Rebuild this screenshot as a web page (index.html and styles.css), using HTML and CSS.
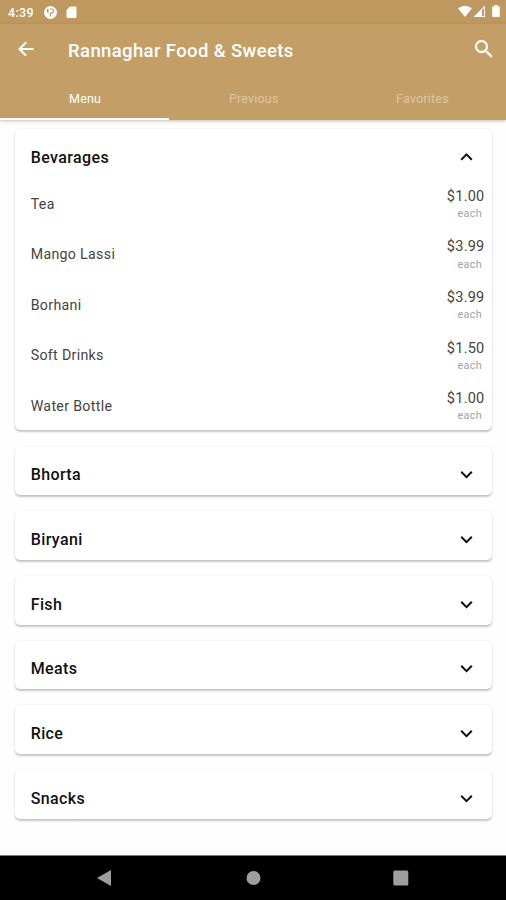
FILE: index.html
```html
<!DOCTYPE html>
<html lang="en">
<head>
<meta charset="utf-8">
<title>Rannaghar Food &amp; Sweets</title>
<link rel="stylesheet" href="styles.css">
</head>
<body>
<div class="screen">
  <div class="status">
    <span class="time">4:39</span>
    <svg class="notice" width="13" height="13" viewBox="0 0 13 13"><circle cx="6.5" cy="6.5" r="6.5" fill="#fff"/><path d="M6 3h1.500a2 2 0 0 1 0 4.200H6.300v3.300" fill="none" stroke="#bf995f" stroke-width="1.200"/><path d="M3.800 2.800v4" stroke="#bf995f" stroke-width="1.500"/></svg>
    <svg class="card-icon" width="11" height="13" viewBox="0 0 11 13"><path d="M4 .5h5.3c.7 0 1.2.5 1.2 1.2v9.1c0 .7-.5 1.2-1.2 1.2H1.700C1 12 .5 11.500.5 10.800V4z" fill="#fff"/><path d="M4 2v1.500M6 2v1.500M8 2v1.500" stroke="#eddfc9" stroke-width=".8"/></svg>
    <svg class="signals" width="43" height="14" viewBox="0 0 43 14"><path d="M0 3.300Q7-1.900 14 3.300L7 12z" fill="#fff"/><path d="M15.500 12L27 .5V12z" fill="#fff"/><path d="M24 5l2-2v8h-2z" fill="#bf995f"/><path d="M35 1.300h1.500V0h3v1.300H41c.5 0 .8.300.8.800v9.100c0 .5-.3.800-.8.800h-6c-.5 0-.8-.3-.8-.8V2.100c0-.5.300-.8.800-.8z" fill="#fff"/></svg>
  </div>
  <header class="appbar">
    <div class="titlebar">
      <svg class="back" width="24" height="24" viewBox="0 0 24 24"><path d="M19.500 11H7.830l5.090-5.090L11.500 4.500 4 12l7.500 7.500 1.410-1.410L7.830 13H19.500z" fill="#fff"/></svg>
      <h1>Rannaghar Food &amp; Sweets</h1>
      <svg class="search" width="24" height="24" viewBox="0 0 24 24"><path d="M15.500 14h-.79l-.28-.27A6.470 6.470 0 0 0 16 9.500 6.500 6.500 0 1 0 9.500 16c1.610 0 3.090-.59 4.230-1.570l.27.28v.79l5 4.990L20.490 19zm-6 0a4.500 4.500 0 1 1 0-9 4.500 4.500 0 0 1 0 9z" fill="#fff" stroke="#fff" stroke-width=".3"/></svg>
    </div>
    <nav class="tabs"><span class="tab active">Menu</span><span class="tab">Previous</span><span class="tab">Favorites</span></nav>
  </header>
  <main>
    <section class="card">
      <div class="head"><h2>Bevarages</h2><svg class="chev" width="24" height="24" viewBox="0 0 24 24"><path d="M12.500 8l-6 6 1.410 1.410L12.500 10.830l4.590 4.580L18.500 14z"/></svg></div>
      <div class="item"><span class="name">Tea</span><div class="cost"><span class="price">$1.00</span><span class="unit">each</span></div></div>
      <div class="item"><span class="name">Mango Lassi</span><div class="cost"><span class="price">$3.99</span><span class="unit">each</span></div></div>
      <div class="item"><span class="name">Borhani</span><div class="cost"><span class="price">$3.99</span><span class="unit">each</span></div></div>
      <div class="item"><span class="name">Soft Drinks</span><div class="cost"><span class="price">$1.50</span><span class="unit">each</span></div></div>
      <div class="item"><span class="name">Water Bottle</span><div class="cost"><span class="price">$1.00</span><span class="unit">each</span></div></div>
    </section>
    <section class="card"><div class="head"><h2>Bhorta</h2><svg class="chev" width="24" height="24" viewBox="0 0 24 24"><path d="M17.090 9.090L12.500 13.670 7.910 9.090 6.500 10.500l6 6 6-6z"/></svg></div></section>
    <section class="card"><div class="head"><h2>Biryani</h2><svg class="chev" width="24" height="24" viewBox="0 0 24 24"><path d="M17.090 9.090L12.500 13.670 7.910 9.090 6.500 10.500l6 6 6-6z"/></svg></div></section>
    <section class="card"><div class="head"><h2>Fish</h2><svg class="chev" width="24" height="24" viewBox="0 0 24 24"><path d="M17.090 9.090L12.500 13.670 7.910 9.090 6.500 10.500l6 6 6-6z"/></svg></div></section>
    <section class="card"><div class="head"><h2>Meats</h2><svg class="chev" width="24" height="24" viewBox="0 0 24 24"><path d="M17.090 9.090L12.500 13.670 7.910 9.090 6.500 10.500l6 6 6-6z"/></svg></div></section>
    <section class="card"><div class="head"><h2>Rice</h2><svg class="chev" width="24" height="24" viewBox="0 0 24 24"><path d="M17.090 9.090L12.500 13.670 7.910 9.090 6.500 10.500l6 6 6-6z"/></svg></div></section>
    <section class="card"><div class="head"><h2>Snacks</h2><svg class="chev" width="24" height="24" viewBox="0 0 24 24"><path d="M17.090 9.090L12.500 13.670 7.910 9.090 6.500 10.500l6 6 6-6z"/></svg></div></section>
  </main>
  <footer class="navbar">
    <svg width="506" height="44" viewBox="0 0 506 44" fill="#9e9e9e"><path d="M97 22l14-8v16z"/><circle cx="253.500" cy="22" r="7"/><rect x="393.300" y="14.500" width="15" height="15" rx="1.500"/></svg>
  </footer>
</div>
</body>
</html>
```
FILE: styles.css
```css
* { box-sizing: border-box; }
body { margin: 0; font-family: Roboto, "Liberation Sans", sans-serif; background: #fff; }
.screen { width: 506px; height: 900px; display: flex; flex-direction: column; overflow: hidden; }
.status { height: 24px; flex: none; background: #be985f; display: flex; align-items: center; padding: 0 6px 0 8px; }
.time { color: #fff; font-size: 12.5px; font-weight: 500; width: 36px; letter-spacing: .3px; }
.notice { margin-right: 8.5px; }
.signals { margin-left: auto; margin-right: -1px; }
.appbar { height: 96px; flex: none; background: #c39f67; box-shadow: 0 1px 3px rgba(90, 60, 20, .35); position: relative; }
.titlebar { height: 50px; display: flex; align-items: center; padding: 0 10px 0 14px; }
h1 { margin: 3px 0 0 30px; flex: 1; color: #fff; font-size: 18.5px; line-height: 24px; font-weight: 500; letter-spacing: .38px; white-space: nowrap; }
.tabs { height: 46px; display: flex; }
.tab { flex: 1; text-align: center; padding: 17px 0 0 1.5px; font-size: 12.5px; line-height: 16px; color: #dfc5a0; letter-spacing: .2px; }
.active { color: #fff; border-bottom: 2px solid #fff; }
main { flex: 1; padding: 9px 14px 0 15px; display: flex; flex-direction: column; gap: 16.2px; background: #fefefe; }
.card { background: #fff; border-radius: 5px; padding: 0 7.5px 0 15.7px; box-shadow: 0 1.5px 2px rgba(0, 0, 0, .22), 0 0 2px rgba(0, 0, 0, .05); }
.head { height: 48.5px; display: flex; align-items: center; justify-content: space-between; padding: 7px 6.5px 0 0; }
h2 { margin: 2px 0 0; font-size: 16px; line-height: 20px; font-weight: 500; letter-spacing: .38px; color: #111; }
.chev { fill: #111; }
.item { height: 50.6px; display: flex; justify-content: space-between; }
.name { padding-top: 16px; font-size: 14.2px; line-height: 20px; color: #444; letter-spacing: .32px; }
.cost { display: flex; flex-direction: column; align-items: flex-end; padding-top: 9.3px; }
.price { font-size: 14.5px; line-height: 20px; color: #444; letter-spacing: .25px; }
.unit { font-size: 10.8px; line-height: 14px; margin-top: .3px; color: #9ca2ac; letter-spacing: .3px; margin-right: 2.5px; }
.navbar { height: 45px; flex: none; background: #000; border-top: 1px solid #777; }
.navbar svg { display: block; }
```
